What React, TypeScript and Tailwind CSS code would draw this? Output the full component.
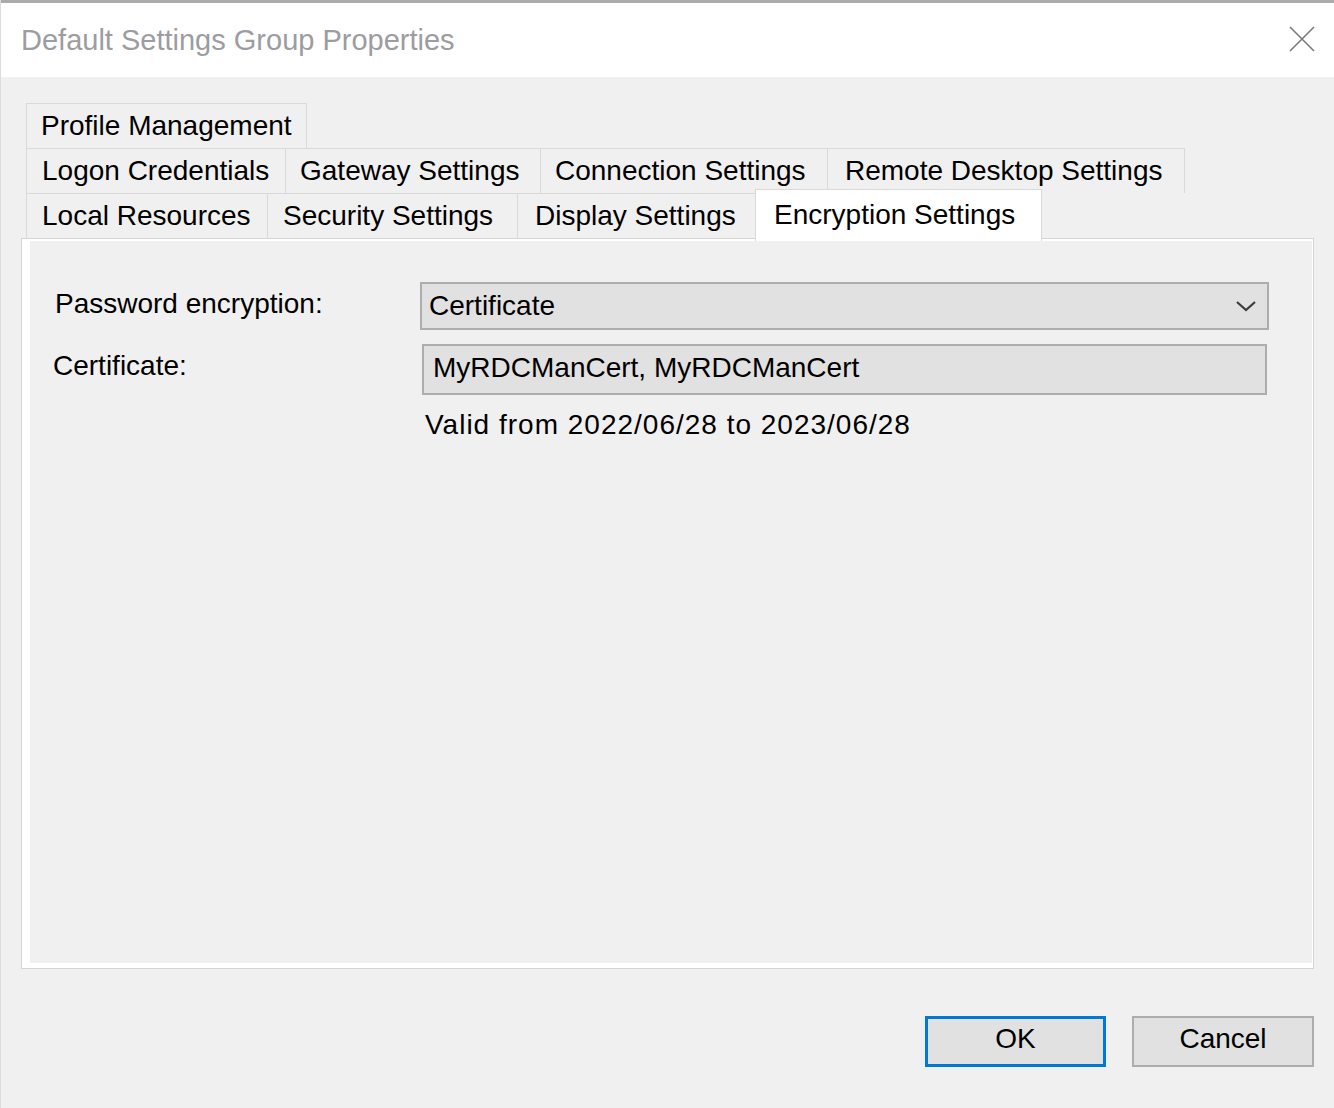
import React from "react";

const ROW_2 = [
  { label: "Logon Credentials", w: "w-[259px]", pl: "pl-[15px]" },
  { label: "Gateway Settings", w: "w-[255px]", pl: "pl-[14px]" },
  { label: "Connection Settings", w: "w-[287px]", pl: "pl-[14px]" },
  { label: "Remote Desktop Settings", w: "w-[358px]", pl: "pl-[17px]" },
];

const ROW_3 = [
  { label: "Local Resources", w: "w-[241px]", pl: "pl-[15px]" },
  { label: "Security Settings", w: "w-[250px]", pl: "pl-[15px]" },
  { label: "Display Settings", w: "w-[238px]", pl: "pl-[17px]" },
];

function Tab({ label, w, pl, last }: { label: string; w: string; pl: string; last?: boolean }) {
  return (
    <div
      className={`${w} ${pl} h-[45px] flex items-center border-t border-l border-[#d9d9d9] bg-[#f0f0f0] whitespace-nowrap ${
        last ? "border-r" : ""
      }`}
    >
      {label}
    </div>
  );
}

export default function App() {
  return (
    <div
      className="w-[1334px] h-[1108px] flex flex-col bg-[#f0f0f0] border-l border-[#dcdcdc] overflow-hidden text-black text-[28px] leading-none"
      style={{ fontFamily: '"Liberation Sans", Arial, sans-serif' }}
    >
      {/* title bar */}
      <div className="h-[77px] shrink-0 bg-white border-t-[3px] border-[#ababab] flex items-center justify-between pl-[20px] pr-[19px]">
        <div className="text-[29px] text-[#9c9ca2] pt-[1px]">Default Settings Group Properties</div>
        <svg width="26" height="26" viewBox="0 0 26 26" className="mb-[3px]">
          <path d="M1 1 L25 25 M25 1 L1 25" stroke="#7a7a7a" strokeWidth="1.6" fill="none" />
        </svg>
      </div>

      <div className="flex-1 flex flex-col pt-[26px] pl-[20px] pr-[20px]">
        {/* tabs */}
        <div className="pl-[5px] flex flex-col">
          <div className="flex">
            <Tab label="Profile Management" w="w-[281px]" pl="pl-[14px]" last />
          </div>
          <div className="flex">
            {ROW_2.map((t, i) => (
              <Tab key={t.label} label={t.label} w={t.w} pl={t.pl} last={i === ROW_2.length - 1} />
            ))}
          </div>
          <div className="flex items-end h-[45px]">
            {ROW_3.map((t) => (
              <Tab key={t.label} label={t.label} w={t.w} pl={t.pl} />
            ))}
            <div className="relative z-10 w-[287px] h-[52px] -mb-[3px] bg-white border-t border-l border-r border-[#d9d9d9] flex pl-[18px] pt-[11px]">
              Encryption Settings
            </div>
          </div>
        </div>

        {/* panel */}
        <div className="h-[731px] shrink-0 border border-[#d5d5d5]">
          <div className="h-full border-l-[8px] border-t-[2px] border-r-[1px] border-b-[5px] border-white bg-[#f0f0f0] pt-[41px] pl-[23px]">
            <div className="flex items-center">
              <div className="w-[367px] pl-[2px] pb-[4px]">Password encryption:</div>
              <div className="w-[849px] h-[48px] bg-[#e1e1e1] border-2 border-[#adadad] flex items-center justify-between pl-[7px] pr-[10px]">
                <span>Certificate</span>
                <svg width="22" height="14" viewBox="0 0 22 14">
                  <path d="M2 3 L11 11 L20 3" stroke="#3c3c3c" strokeWidth="2.2" fill="none" />
                </svg>
              </div>
            </div>
            <div className="flex items-start mt-[14px]">
              <div className="w-[369px] pt-[8px]">Certificate:</div>
              <div className="flex flex-col">
                <div className="w-[845px] h-[51px] bg-[#e1e1e1] border-2 border-[#adadad] flex items-center pl-[9px] pb-[4px]">
                  MyRDCManCert, MyRDCManCert
                </div>
                <div className="pl-[3px] pt-[16px] tracking-[1px]">Valid from 2022/06/28 to 2023/06/28</div>
              </div>
            </div>
          </div>
        </div>

        {/* buttons */}
        <div className="flex justify-end gap-[26px] mt-[47px]">
          <button className="w-[181px] h-[51px] bg-[#e1e1e1] border-[3px] border-[#0078d7] flex items-center justify-center pb-[6px]">
            OK
          </button>
          <button className="w-[182px] h-[51px] bg-[#e1e1e1] border-2 border-[#adadad] flex items-center justify-center pb-[6px]">
            Cancel
          </button>
        </div>
      </div>
    </div>
  );
}
